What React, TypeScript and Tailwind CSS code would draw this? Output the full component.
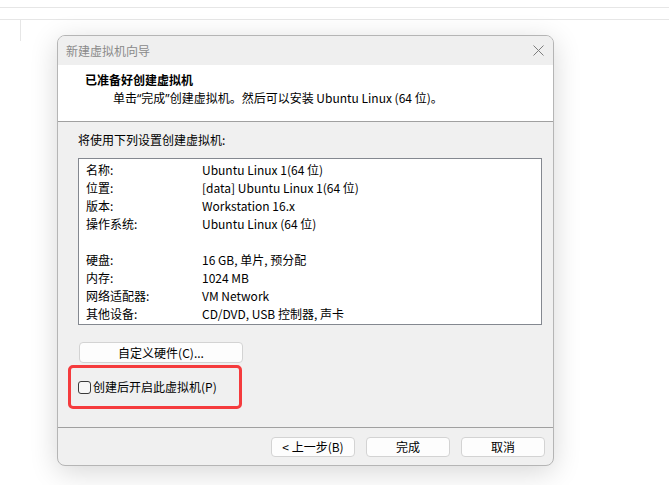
import React from "react";

const font = { fontFamily: '"Noto Sans CJK SC", "Noto Sans", sans-serif' };
const latin = { fontFamily: '"Noto Sans", sans-serif' };

const rows: [string, string][] = [
  ["名称:", "Ubuntu Linux 1(64 位)"],
  ["位置:", "[data] Ubuntu Linux 1(64 位)"],
  ["版本:", "Workstation 16.x"],
  ["操作系统:", "Ubuntu Linux (64 位)"],
  ["", ""],
  ["硬盘:", "16 GB, 单片, 预分配"],
  ["内存:", "1024 MB"],
  ["网络适配器:", "VM Network"],
  ["其他设备:", "CD/DVD, USB 控制器, 声卡"],
];

function Btn({ children }: { children: React.ReactNode }) {
  return (
    <div className="w-[84px] h-[20px] rounded-[4px] border border-[#d3d3d3] bg-[#fdfdfd] flex items-center justify-center text-[12px] leading-none text-black">
      {children}
    </div>
  );
}

export default function App() {
  return (
    <div className="w-[669px] h-[485px] bg-white overflow-hidden text-black" style={font}>
      <div className="h-[7px]" />
      <div className="h-px bg-[#e6e6e6]" />
      <div className="h-[11px]" />
      <div className="h-px bg-[#e6e6e6]" />
      <div className="flex items-start">
        <div className="ml-[20px] w-px h-[21px] bg-[#e6e6e6]" />
        <div className="ml-[36px] mt-[15px] w-[497px] h-[431px] rounded-[8px] border border-[#b5b5b5] bg-[#f0f0f0] shadow-[0_6px_28px_rgba(0,0,0,0.16)] flex flex-col overflow-hidden">
          {/* title bar */}
          <div className="h-[29px] flex items-center justify-between pl-[8px] pr-[9px] bg-[#efefef]">
            <span className="text-[12px] text-[#8a8a8a] leading-none">新建虚拟机向导</span>
            <svg width="11" height="11" viewBox="0 0 11 11">
              <path d="M0.5 0.5 L10.5 10.5 M10.5 0.5 L0.5 10.5" stroke="#7d7d7d" strokeWidth="1" />
            </svg>
          </div>
          {/* header */}
          <div className="h-[57px] bg-white border-b border-[#a0a0a0] pt-[6px] pl-[27px]">
            <div className="text-[12px] leading-[18px] font-bold">已准备好创建虚拟机</div>
            <div className="text-[12px] leading-[18px] pl-[28px]">
              单击<span style={latin}>“</span>完成<span style={latin}>”</span>创建虚拟机。然后可以安装 Ubuntu Linux (64 位)。
            </div>
          </div>
          {/* body */}
          <div className="flex-1 flex flex-col">
            <div className="pl-[20px] pt-[9px] text-[12px] leading-[18px]">将使用下列设置创建虚拟机:</div>
            <div className="ml-[20px] mt-[9px] w-[464px] h-[167px] border border-[#848890] bg-white pt-[2px] pl-[7px]">
              {rows.map(([k, v], i) => (
                <div key={i} className="flex h-[18px] items-center text-[12px] leading-[18px]">
                  <div className="w-[116px]">{k}</div>
                  <div>{v}</div>
                </div>
              ))}
            </div>
            <div className="ml-[21px] mt-[17px] w-[164px] h-[21px] rounded-[4px] border border-[#d3d3d3] bg-[#fdfdfd] flex items-center justify-center text-[12px] leading-none">
              自定义硬件(C)...
            </div>
            <div className="ml-[10px] mt-[2px] w-[174px] h-[44px] rounded-[5px] border-[3px] border-[#f53b3d] flex items-center pl-[7px]">
              <div className="w-[13px] h-[13px] rounded-[3px] border border-[#3a3a3a] bg-[#f7f7f7]" />
              <span className="ml-[2px] text-[12px] leading-none">创建后开启此虚拟机(P)</span>
            </div>
            <div className="mt-[18px] h-px bg-[#a0a0a0]" />
            <div className="flex justify-end gap-[11px] pr-[8px] pt-[9px]">
              <Btn>&lt; 上一步(B)</Btn>
              <Btn>完成</Btn>
              <Btn>取消</Btn>
            </div>
          </div>
        </div>
      </div>
    </div>
  );
}
